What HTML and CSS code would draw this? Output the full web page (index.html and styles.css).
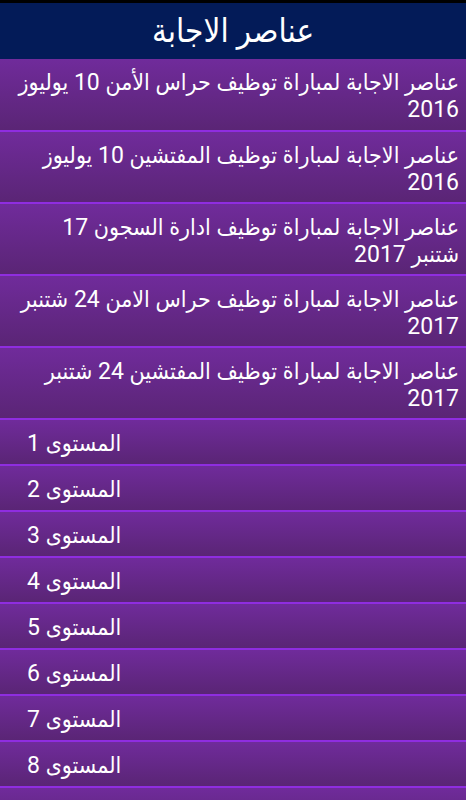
FILE: index.html
```html
<!DOCTYPE html>
<html lang="ar" dir="rtl">
<head>
    <meta charset="UTF-8">
    <meta name="viewport" content="width=device-width, initial-scale=1.0">
    <title>عناصر الاجابة</title>
    <link rel="stylesheet" href="styles.css">
</head>
<body>
    <div class="status"></div>
    <header class="topbar">
        <h1>عناصر الاجابة</h1>
    </header>

    <ul class="list">
        <li class="item">عناصر الاجابة لمباراة توظيف حراس الأمن 10 يوليوز 2016</li>
        <li class="item">عناصر الاجابة لمباراة توظيف المفتشين 10 يوليوز 2016</li>
        <li class="item">عناصر الاجابة لمباراة توظيف ادارة السجون 17 شتنبر 2017</li>
        <li class="item">عناصر الاجابة لمباراة توظيف حراس الامن 24 شتنبر 2017</li>
        <li class="item">عناصر الاجابة لمباراة توظيف المفتشين 24 شتنبر 2017</li>
        <li class="item level">المستوى 1</li>
        <li class="item level">المستوى 2</li>
        <li class="item level">المستوى 3</li>
        <li class="item level">المستوى 4</li>
        <li class="item level">المستوى 5</li>
        <li class="item level">المستوى 6</li>
        <li class="item level">المستوى 7</li>
        <li class="item level">المستوى 8</li>
        <li class="item level">المستوى 9</li>
    </ul>
</body>
</html>
```

FILE: styles.css
```css
body {
    margin: 0;
    background: #5a2576;
    font-family: Roboto, "DejaVu Sans Condensed", "DejaVu Sans", sans-serif;
    color: white;
    overflow: hidden;
}

.status {
    height: 3px;
    background: #000;
}

.topbar {
    height: 56px;
    background: #031b58;
    display: flex;
    align-items: center;
    justify-content: center;
}

.topbar h1 {
    margin: 0 0 2px;
    font-size: 33px;
    font-weight: normal;
}

.list {
    list-style: none;
    margin: 0;
    padding: 0;
}

.item {
    padding: 10px 7px 6px 13px;
    font-size: 23px;
    line-height: 27px;
    min-height: 54px;
    background: linear-gradient(to bottom, #702b9b, #5a2575);
    border-top: 2px solid #8f2de0;
}

.item:first-child {
    border-top: none;
    min-height: 55px;
}

.level {
    min-height: 27px;
    padding: 9.5px 7px 7.5px 27px;
    text-align: left;
}
```
